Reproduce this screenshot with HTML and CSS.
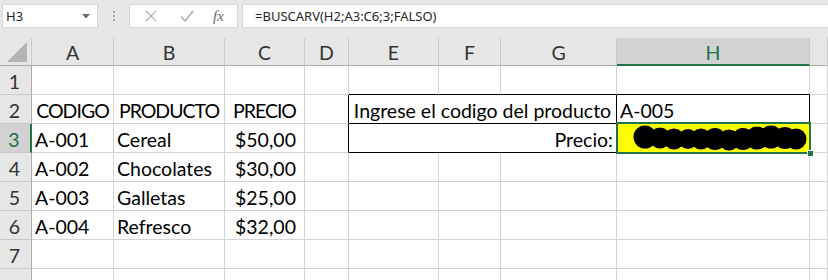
FILE: index.html
```html
<!DOCTYPE html>
<html lang="es">
<head>
  <meta charset="UTF-8">
  <title>BUSCARV</title>
  <link rel="stylesheet" href="styles.css">
</head>
<body>
  <div class="toolbar">
    <div class="namebox">
      <span>H3</span>
      <svg class="caret" width="8" height="5" viewBox="0 0 8 5"><path d="M0 0h8L4 4.5z" fill="#6a6a6a"/></svg>
    </div>
    <div class="grip">
      <span></span><span></span><span></span>
    </div>
    <div class="fxbox">
      <svg class="icon" width="12" height="12" viewBox="0 0 12 12"><path d="M1 1l10 10M11 1L1 11" stroke="#b3b3b3" stroke-width="1.3" fill="none"/></svg>
      <svg class="icon" width="14" height="12" viewBox="0 0 14 12"><path d="M1 6.5l4 4.5L13 1" stroke="#b3b3b3" stroke-width="1.8" fill="none"/></svg>
      <span class="fx">fx</span>
    </div>
    <div class="formula">=BUSCARV(H2;A3:C6;3;FALSO)</div>
  </div>

  <div class="sheet">
    <!-- column headers -->
    <div class="h corner"><div class="tri"></div></div>
    <div class="h">A</div>
    <div class="h">B</div>
    <div class="h">C</div>
    <div class="h">D</div>
    <div class="h">E</div>
    <div class="h">F</div>
    <div class="h">G</div>
    <div class="h sel-col">H</div>
    <div class="h"></div>

    <!-- row 1 -->
    <div class="r">1</div>
    <div class="c"></div><div class="c"></div><div class="c"></div><div class="c"></div>
    <div class="c bb"></div><div class="c bb"></div><div class="c bb"></div><div class="c bb"></div>
    <div class="c"></div>

    <!-- row 2 -->
    <div class="r">2</div>
    <div class="c center caps">CODIGO</div>
    <div class="c center caps">PRODUCTO</div>
    <div class="c center caps">PRECIO</div>
    <div class="c br"></div>
    <div class="c box span3 center">Ingrese el codigo del producto</div>
    <div class="c box">A-005</div>
    <div class="c"></div>

    <!-- row 3 -->
    <div class="r sel-row">3</div>
    <div class="c">A-001</div>
    <div class="c">Cereal</div>
    <div class="c acct"><span>$</span><span>50,00</span></div>
    <div class="c br"></div>
    <div class="c box span3 right">Precio:</div>
    <div class="c box active">
      <svg class="scribble" width="178" height="28" viewBox="0 0 178 28">
        <g fill="#000">
          <circle cx="13" cy="13" r="11.5"/>
          <circle cx="28" cy="14" r="10.5"/>
          <circle cx="42" cy="15" r="10.5"/>
          <circle cx="56" cy="15" r="10"/>
          <circle cx="69" cy="15" r="10.5"/>
          <circle cx="83" cy="15" r="11"/>
          <circle cx="97" cy="16" r="10.5"/>
          <circle cx="111" cy="15" r="11"/>
          <circle cx="125" cy="14" r="11.5"/>
          <circle cx="139" cy="13" r="11.5"/>
          <circle cx="153" cy="14" r="11"/>
          <circle cx="164" cy="15" r="10.5"/>
        </g>
      </svg>
    </div>
    <div class="c"></div>

    <!-- row 4 -->
    <div class="r">4</div>
    <div class="c">A-002</div>
    <div class="c">Chocolates</div>
    <div class="c acct"><span>$</span><span>30,00</span></div>
    <div class="c"></div><div class="c"></div><div class="c"></div><div class="c"></div><div class="c"></div><div class="c"></div>

    <!-- row 5 -->
    <div class="r">5</div>
    <div class="c">A-003</div>
    <div class="c">Galletas</div>
    <div class="c acct"><span>$</span><span>25,00</span></div>
    <div class="c"></div><div class="c"></div><div class="c"></div><div class="c"></div><div class="c"></div><div class="c"></div>

    <!-- row 6 -->
    <div class="r">6</div>
    <div class="c">A-004</div>
    <div class="c">Refresco</div>
    <div class="c acct"><span>$</span><span>32,00</span></div>
    <div class="c"></div><div class="c"></div><div class="c"></div><div class="c"></div><div class="c"></div><div class="c"></div>

    <!-- row 7 -->
    <div class="r">7</div>
    <div class="c"></div><div class="c"></div><div class="c"></div><div class="c"></div><div class="c"></div><div class="c"></div><div class="c"></div><div class="c"></div><div class="c"></div>

    <!-- row 8 (cut by the window) -->
    <div class="r"></div>
    <div class="c"></div><div class="c"></div><div class="c"></div><div class="c"></div><div class="c"></div><div class="c"></div><div class="c"></div><div class="c"></div><div class="c"></div>
  </div>
</body>
</html>
```

FILE: styles.css
```css
body {
  margin: 0;
  padding: 0;
  background: #fff;
  font-family: Lato, "Liberation Sans", sans-serif;
  overflow: hidden;
}
.toolbar {
  display: flex;
  align-items: flex-start;
  height: 38px;
  box-sizing: border-box;
  padding-top: 4px;
  background: #e6e6e6;
  font-family: "Noto Sans", "Open Sans", sans-serif;
  font-size: 13px;
  color: #262626;
}
.namebox {
  display: flex;
  align-items: center;
  justify-content: space-between;
  width: 96px;
  height: 24px;
  margin-left: 2px;
  padding: 0 7px 0 3px;
  box-sizing: border-box;
  background: #fff;
  border: 1px solid #d6d6d6;
}
.grip {
  width: 31px;
  height: 24px;
  display: flex;
  flex-direction: column;
  align-items: center;
  justify-content: center;
  gap: 2px;
}
.grip span {
  width: 2px;
  height: 2px;
  background: #a8a8a8;
}
.fxbox {
  display: flex;
  align-items: center;
  width: 109px;
  height: 24px;
  box-sizing: border-box;
  padding: 0 10px 0 15px;
  gap: 23px;
  background: #fff;
  border: 1px solid #d6d6d6;
}
.fxbox .icon {
  flex: none;
}
.fx {
  font-family: "Liberation Serif", serif;
  font-style: italic;
  font-size: 15px;
  color: #6a6a6a;
  margin-left: -4px;
}
.formula {
  flex: 1;
  height: 24px;
  margin-left: 4px;
  padding-left: 12px;
  box-sizing: border-box;
  line-height: 22px;
  background: #fff;
  border: 1px solid #d6d6d6;
  border-right: none;
}

.sheet {
  display: grid;
  grid-template-columns: 32px 82px 111px 80px 44px 90px 62px 116px 193px 1fr;
  grid-template-rows: 28px repeat(8, 29px);
  font-size: 19.5px;
  color: #000;
}
.sheet > div {
  box-sizing: border-box;
  border-right: 1px solid #d4d4d4;
  border-bottom: 1px solid #d4d4d4;
  white-space: nowrap;
  overflow: hidden;
}
.h {
  background: #e6e6e6;
  border-right-color: #c9c9c9 !important;
  border-bottom-color: #ababab !important;
  color: #333;
  display: flex;
  align-items: center;
  justify-content: center;
  padding-top: 2px;
}
.corner {
  justify-content: flex-end !important;
  align-items: flex-end !important;
  padding: 0 4px 3px 0;
}
.tri {
  width: 20px;
  height: 20px;
  background: #b4b4b4;
  clip-path: polygon(100% 0, 100% 100%, 0 100%);
}
.sel-col {
  background: #d2d2d2;
  color: #217346;
  border-bottom: 2px solid #217346 !important;
}
.r {
  background: #e6e6e6;
  border-right-color: #ababab !important;
  border-bottom-color: #c9c9c9 !important;
  color: #333;
  display: flex;
  align-items: flex-end;
  justify-content: center;
  padding: 0 2px 1px 0;
}
.sel-row {
  background: #d2d2d2;
  color: #217346;
  border-right: 2px solid #217346 !important;
}
.c {
  display: flex;
  align-items: flex-end;
  padding: 0 3px 1px;
}
.center {
  justify-content: center;
}
.right {
  justify-content: flex-end;
}
.caps {
  letter-spacing: -1px;
}
.acct {
  justify-content: space-between;
  padding: 0 9px 1px 10px;
}
.span3 {
  grid-column: span 3;
}
.bb {
  border-bottom-color: #000 !important;
}
.br {
  border-right-color: #000 !important;
}
.box {
  border-right-color: #000 !important;
  border-bottom-color: #000 !important;
}
.active {
  position: relative;
  overflow: visible !important;
  background: #ffff00;
  align-items: center;
  padding: 0 0 0 15px;
}
.active::before {
  content: "";
  position: absolute;
  left: -1px;
  top: -2px;
  right: -2px;
  bottom: -2px;
  border: 2px solid #217346;
}
.active::after {
  content: "";
  position: absolute;
  right: -5px;
  bottom: -5px;
  width: 5px;
  height: 5px;
  background: #217346;
  border: 1px solid #fff;
}
.scribble {
  flex: none;
}
```
